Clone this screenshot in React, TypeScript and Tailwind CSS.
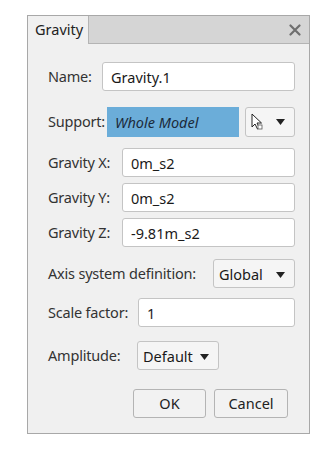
import type { ReactNode } from "react";

const font = { fontFamily: '"Noto Sans", "Open Sans", sans-serif' };

function Caret() {
  return (
    <svg width="9" height="6" viewBox="0 0 9 6" className="shrink-0">
      <path d="M0 0h9L4.5 6z" fill="#222" />
    </svg>
  );
}

function Field({ value }: { value: string }) {
  return (
    <div className="flex h-[29px] flex-1 items-center rounded-[3px] border border-[#c4c4c4] bg-white pl-[8px] pt-[2px] text-[14.5px] text-[#1a1a1a]">
      {value}
    </div>
  );
}

function Row({ label, w, children, className = "" }: { label: string; w: string; children: ReactNode; className?: string }) {
  return (
    <div className={`flex items-center ${className}`}>
      <span className={`shrink-0 whitespace-nowrap text-[14.5px] tracking-[-0.2px] text-[#333] ${w}`}>{label}</span>
      {children}
    </div>
  );
}

export default function App() {
  return (
    <div className="h-[450px] w-[335px] bg-white pl-[27px] pt-[15px]" style={font}>
      <div className="flex h-[419px] w-[283px] flex-col border border-[#a8a8a8] bg-[#f0f0f0]">
        <div className="flex h-[28px]">
          <div className="flex w-[61px] items-center border-r border-[#b4b4b4] pl-[7px] text-[14.5px] text-[#222]">
            Gravity
          </div>
          <div className="flex flex-1 items-center justify-end border-b border-[#b4b4b4] bg-[#d5d5d5] pr-[8px]">
            <svg width="12" height="12" viewBox="0 0 12 12">
              <path d="M1.5 1.5l9 9M10.5 1.5l-9 9" stroke="#6e6e6e" strokeWidth="2.2" strokeLinecap="round" />
            </svg>
          </div>
        </div>

        <div className="flex flex-col pl-[20px] pr-[14px]">
          <Row label="Name:" w="w-[54px]" className="mt-[18px]">
            <Field value="Gravity.1" />
          </Row>

          <Row label="Support:" w="w-[59px]" className="mt-[16px]">
            <div className="flex h-[30px] w-[132px] items-center bg-[#6badd9] pl-[8px] pt-[2px] text-[14.5px] italic text-[#1b2a3a]">
              Whole Model
            </div>
            <div className="ml-[6px] flex h-[30px] flex-1 items-center justify-between rounded-[3px] border border-[#c4c4c4] bg-[#f5f5f5] pl-[5px] pr-[9px]">
              <svg width="12" height="18" viewBox="0 0 12 18">
                <path d="M1 1v13l3-3 2.5 5 2-1-2.5-5h4.5z" fill="#fff" stroke="#222" strokeWidth="1" strokeLinejoin="round" />
                <rect x="7" y="12" width="4" height="4" fill="#fff" stroke="#555" strokeWidth="0.8" />
              </svg>
              <Caret />
            </div>
          </Row>

          <Row label="Gravity X:" w="w-[74px]" className="mt-[11px]">
            <Field value="0m_s2" />
          </Row>
          <Row label="Gravity Y:" w="w-[74px]" className="mt-[6px]">
            <Field value="0m_s2" />
          </Row>
          <Row label="Gravity Z:" w="w-[74px]" className="mt-[6px]">
            <Field value="-9.81m_s2" />
          </Row>

          <Row label="Axis system definition:" w="w-[165px]" className="mt-[12px]">
            <div className="flex h-[29px] flex-1 items-center justify-between rounded-[3px] border border-[#c4c4c4] bg-[#f5f5f5] pl-[5px] pr-[9px] pt-[2px] text-[14.5px] text-[#1a1a1a]">
              Global
              <Caret />
            </div>
          </Row>

          <Row label="Scale factor:" w="w-[90px]" className="mt-[10px]">
            <Field value="1" />
          </Row>

          <Row label="Amplitude:" w="w-[89px]" className="mt-[14px]">
            <div className="flex h-[29px] w-[82px] items-center justify-between rounded-[3px] border border-[#c4c4c4] bg-[#f5f5f5] pl-[5px] pr-[9px] pt-[2px] text-[14.5px] text-[#1a1a1a]">
              Default
              <Caret />
            </div>
          </Row>

          <div className="mt-[19px] flex justify-end gap-[8px] pr-[7px]">
            <button className="h-[29px] w-[73px] rounded-[3px] border border-[#b4b4b4] bg-[#f2f2f2] text-[14.5px] text-[#222]">
              OK
            </button>
            <button className="h-[29px] w-[74px] rounded-[3px] border border-[#b4b4b4] bg-[#f2f2f2] text-[14.5px] text-[#222]">
              Cancel
            </button>
          </div>
        </div>
      </div>
    </div>
  );
}
